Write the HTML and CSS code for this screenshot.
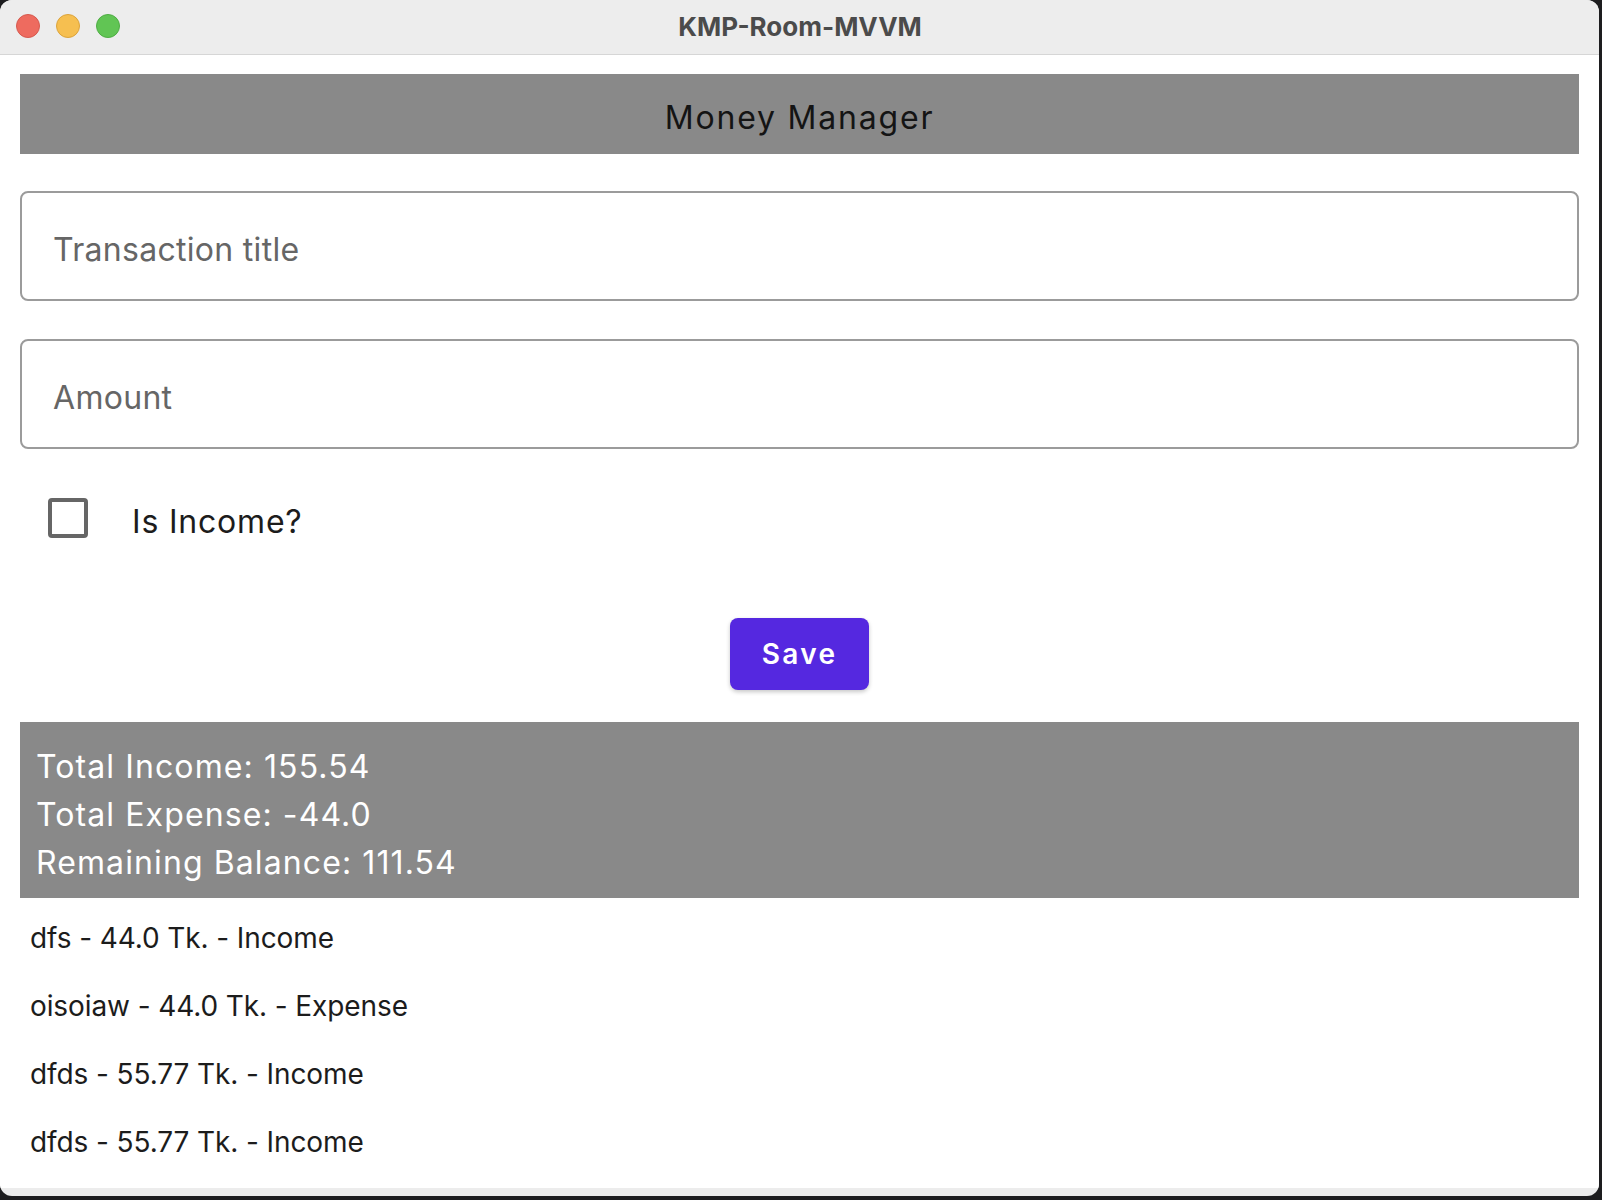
FILE: index.html
```html
<!DOCTYPE html>
<html>
<head>
<meta charset="utf-8">
<title>KMP-Room-MVVM</title>
<link rel="stylesheet" href="styles.css">
</head>
<body>
<div class="window">
  <div class="titlebar">
    <div class="lights">
      <span class="light red"></span>
      <span class="light yellow"></span>
      <span class="light green"></span>
    </div>
    <div class="wintitle">KMP-Room-MVVM</div>
  </div>
  <div class="content">
    <div class="header">Money Manager</div>
    <div class="field">Transaction title</div>
    <div class="field field-second">Amount</div>
    <div class="check-row">
      <span class="checkbox"></span>
      <span class="check-label">Is Income?</span>
    </div>
    <div class="btn-row">
      <button class="save">Save</button>
    </div>
    <div class="summary">
      <div class="sum-line">Total Income: 155.54</div>
      <div class="sum-line">Total Expense: -44.0</div>
      <div class="sum-line">Remaining Balance: 111.54</div>
    </div>
    <div class="list">
      <div class="item">dfs - 44.0 Tk. - Income</div>
      <div class="item">oisoiaw - 44.0 Tk. - Expense</div>
      <div class="item">dfds - 55.77 Tk. - Income</div>
      <div class="item">dfds - 55.77 Tk. - Income</div>
    </div>
  </div>
</div>
</body>
</html>
```
FILE: styles.css
```css
* { box-sizing: border-box; }
html, body {
  margin: 0;
  padding: 0;
  background: #1d1d1f;
  width: 1602px;
  height: 1200px;
  overflow: hidden;
  font-family: Inter, "Noto Sans", sans-serif;
}
.window {
  width: 1599px;
  height: 1196px;
  background: #ececec;
  border-radius: 12px;
  overflow: hidden;
  display: flex;
  flex-direction: column;
}
.titlebar {
  height: 55px;
  flex: 0 0 55px;
  background: #ededed;
  border-bottom: 1px solid #d6d6d6;
  display: flex;
  align-items: center;
  justify-content: center;
  position: relative;
}
.lights {
  position: absolute;
  left: 16px;
  top: 14px;
  display: flex;
  gap: 16px;
}
.light {
  width: 24px;
  height: 24px;
  border-radius: 50%;
  display: block;
}
.red { background: #ee6b5f; border: 1px solid #d65a4f; }
.yellow { background: #f6bf50; border: 1px solid #dca43c; }
.green { background: #61c554; border: 1px solid #4fad44; }
.wintitle {
  font-size: 26px;
  font-weight: 700;
  color: #4b4b4b;
  padding-left: 1px;
  margin-top: -2px;
}
.content {
  flex: 1;
  background: #ffffff;
  margin-bottom: 8px;
  padding: 19px 20px 0 20px;
  display: flex;
  flex-direction: column;
}
.header {
  height: 80px;
  background: #898989;
  color: #141414;
  font-size: 32px;
  display: flex;
  align-items: center;
  justify-content: center;
  padding-top: 7px;
  letter-spacing: 1.8px;
}
.field {
  margin-top: 37px;
  height: 110px;
  border: 2px solid #9b9b9b;
  border-radius: 8px;
  display: flex;
  align-items: center;
  padding: 7px 0 0 31px;
  font-size: 32px;
  color: #666666;
  letter-spacing: 0.3px;
}
.field-second { margin-top: 38px; }
.check-row {
  margin-top: 49px;
  height: 40px;
  display: flex;
  align-items: center;
  padding-left: 28px;
}
.checkbox {
  width: 40px;
  height: 40px;
  border: 4px solid #666666;
  border-radius: 4px;
  display: block;
}
.check-label {
  margin-left: 44px;
  font-size: 32px;
  color: #1c1c1c;
  padding-top: 6px;
  letter-spacing: 0.8px;
}
.btn-row {
  margin-top: 80px;
  display: flex;
  justify-content: center;
}
.save {
  width: 139px;
  height: 72px;
  background: #5528e0;
  color: #ffffff;
  border: none;
  border-radius: 8px;
  font-family: Inter, "Noto Sans", sans-serif;
  font-size: 28px;
  font-weight: 600;
  letter-spacing: 2.3px;
  box-shadow: 0 2px 4px rgba(0,0,0,0.22);
  padding: 0;
}
.summary {
  margin-top: 32px;
  background: #898989;
  padding: 21px 16px 11px 16px;
  color: #ffffff;
  font-size: 32px;
  letter-spacing: 1.1px;
}
.sum-line {
  height: 48px;
  line-height: 48px;
}
.list {
  padding-top: 6px;
  padding-left: 10px;
}
.item {
  height: 68px;
  line-height: 68px;
  font-size: 28px;
  color: #1c1c1c;
  letter-spacing: -0.1px;
}
```
